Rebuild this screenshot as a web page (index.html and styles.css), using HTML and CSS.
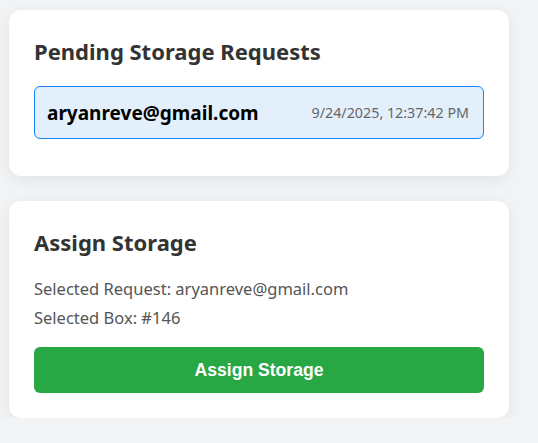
FILE: index.html
```html
<!DOCTYPE html>
<html>
<head>
<meta charset="utf-8">
<link rel="stylesheet" href="styles.css">
</head>
<body>
<main class="column">
  <section class="card">
    <h2 class="card-title">Pending Storage Requests</h2>
    <ul class="request-list">
      <li class="request selected">
        <span class="request-email">aryanreve@gmail.com</span>
        <span class="request-date">9/24/2025, 12:37:42 PM</span>
      </li>
    </ul>
  </section>
  <section class="card">
    <h2 class="card-title">Assign Storage</h2>
    <p class="info">Selected Request: aryanreve@gmail.com</p>
    <p class="info">Selected Box: #146</p>
    <button class="assign-btn">Assign Storage</button>
  </section>
</main>
</body>
</html>
```
FILE: styles.css
```css
html, body {
  margin: 0;
  padding: 0;
  background: #f3f4f6;
}
body {
  font-family: "Noto Sans", "Open Sans", sans-serif;
  color: #333;
}
.column {
  width: 500px;
  padding: 10px 0 0 9px;
  display: flex;
  flex-direction: column;
  gap: 25px;
}
.card {
  background: #fff;
  border-radius: 12px;
  box-shadow: 0 4px 18px rgba(0,0,0,0.08);
  padding: 25px;
}
.card-title {
  margin: 1px 0 17px;
  font-size: 22px;
  font-weight: 700;
  color: #333;
  line-height: 30px;
}
.request-list {
  list-style: none;
  margin: 20px 0 12px;
  padding: 0;
}
.request {
  display: flex;
  justify-content: space-between;
  align-items: center;
  height: 53px;
  box-sizing: border-box;
  padding: 0 14px 0 12px;
  border: 1px solid #1a84f5;
  border-radius: 6px;
  background: #e3f0fc;
}
.request-email {
  font-size: 19px;
  font-weight: 700;
  color: #000;
}
.request-date {
  font-size: 14.3px;
  color: #666;
}
.info {
  margin: 0;
  font-size: 16.5px;
  line-height: 29px;
  color: #555;
}
.assign-btn {
  display: block;
  width: 100%;
  margin-top: 15px;
  height: 46px;
  border: none;
  border-radius: 6px;
  background: #28a745;
  color: #fff;
  font-family: "Liberation Sans", Arial, sans-serif;
  font-size: 17.6px;
  font-weight: 700;
}
```
